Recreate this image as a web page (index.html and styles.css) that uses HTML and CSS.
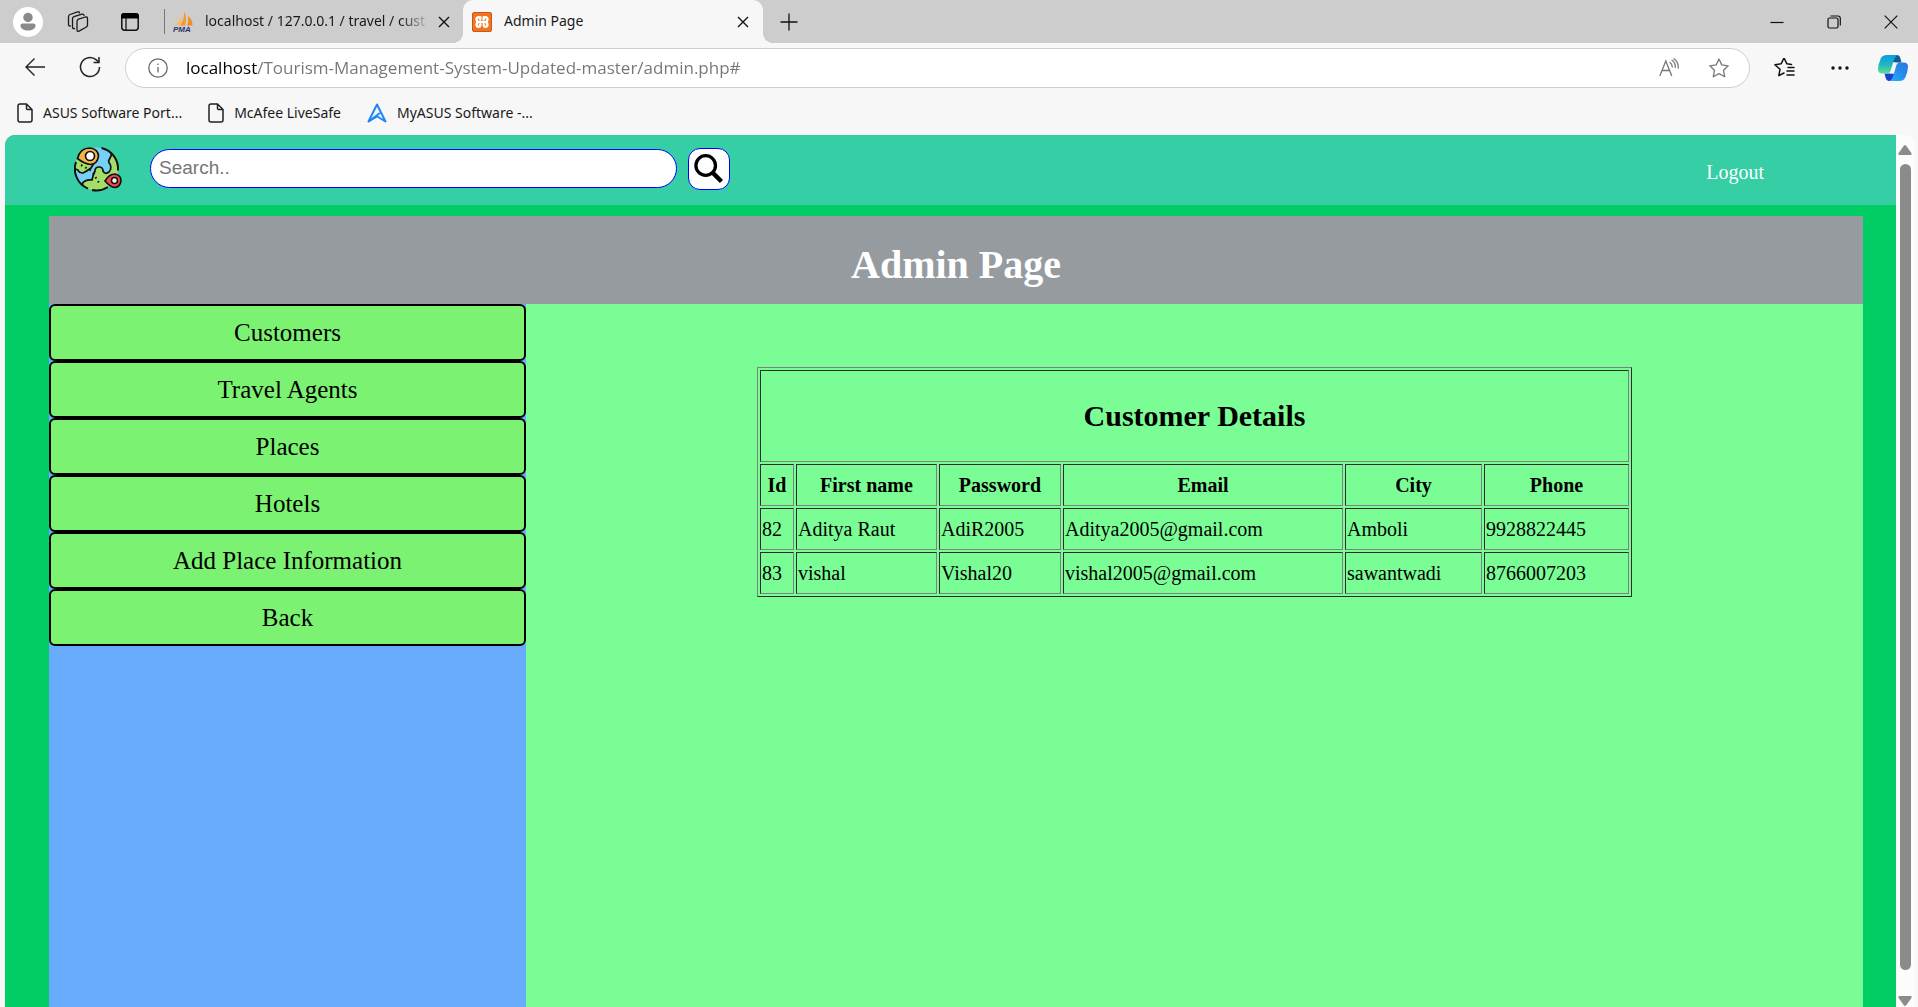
FILE: index.html
```html
<!DOCTYPE html>
<html lang="en">
<head>
<meta charset="utf-8">
<title>Admin Page</title>
<link rel="stylesheet" href="styles.css">
</head>
<body>
<header class="browser">
  <div class="tabstrip">
    <button class="icon-btn avatar-btn" aria-label="Profile"><svg width="30" height="30" viewBox="0 0 30 30"><circle cx="15" cy="15" r="15" fill="#fff"/><circle cx="15" cy="10.500" r="4.700" fill="#8a8a8a"/><path d="M9.500 16.500h11a2 2 0 0 1 2 2c0 3.200-3.400 5-7.500 5s-7.500-1.800-7.500-5a2 2 0 0 1 2-2z" fill="#8a8a8a"/></svg></button>
    <button class="icon-btn workspaces-btn" aria-label="Workspaces"><svg width="22" height="22" viewBox="0 0 22 22" fill="none" stroke="#1a1a1a" stroke-width="1.300" stroke-linejoin="round" stroke-linecap="round"><path d="M11.500 8.200L18.500 6q2-.5 2 1.500v6.500q0 1.500-1.500 2.300l-7 3.800q-2 .8-2-1.300v-8q0-2 1.500-2.600z"/><path d="M7.500 17.500q-2 .5-2-1.500V8q0-1.800 1.500-2.300L15 3.200q1.800-.4 2 1.300"/><path d="M3.300 15Q1.500 15.200 1.500 13.500V5.800q0-1.800 1.500-2.300L10.500.9q1.800-.4 2 1"/></svg></button>
    <button class="icon-btn tabmenu-btn" aria-label="Tab actions menu"><svg width="18" height="18" viewBox="0 0 18 18"><rect x=".8" y=".8" width="16.400" height="16.400" rx="3" fill="none" stroke="#111" stroke-width="1.500"/><path d="M0 5.500V3a3 3 0 0 1 3-3h12a3 3 0 0 1 3 3v2.500z" fill="#000"/><path d="M5 5v12" stroke="#111" stroke-width="1.300"/></svg></button>
    <span class="divider"></span>
    <div class="tab">
      <svg class="favicon" width="20" height="20" viewBox="0 0 20 20"><path d="M11 0c2.500 3 2.500 9 1 13.500H7C10 10 11.500 5 11 0z" fill="#f7962a"/><path d="M9 4c.5 3 0 7-2 9.500H1c3-2 6-5 8-9.500z" fill="#f9bb70"/><path d="M15 4c3 2 4.500 5.500 4.500 9.500H14c1.500-3 1.500-6 1-9.500z" fill="#ef8d1f"/><text x="0" y="19.500" font-family="Liberation Sans" font-size="8" font-weight="bold" font-style="italic" fill="#34346e">PMA</text></svg>
      <a class="tab-title fade" href="#">localhost / 127.0.0.1 / travel / cust</a>
      <button class="icon-btn tab-close" aria-label="Close tab"><svg width="12" height="12" viewBox="0 0 12 12" stroke="#111" stroke-width="1.400"><path d="M1 1l10 10M11 1L1 11"/></svg></button>
    </div>
    <div class="tab tab-active">
      <svg class="favicon" width="20" height="20" viewBox="0 0 20 20"><rect x=".5" y=".5" width="19" height="19" rx="1.500" fill="#f27321" stroke="#c75a12"/><path d="M7 10h6M8.300 5.200H6.500a1.900 1.900 0 0 0-1.900 2.200c.1 1.300.8 1.800.8 2.600s-.7 1.300-.8 2.600a1.900 1.900 0 0 0 1.900 2.200c1.300 0 1.800-.8 1.800-2.300M11.700 5.200h1.800a1.900 1.900 0 0 1 1.900 2.200c-.1 1.300-.8 1.800-.8 2.600s.7 1.300.8 2.600a1.900 1.900 0 0 1-1.900 2.200c-1.300 0-1.800-.8-1.800-2.300M8.300 5.200v2M11.700 5.200v2" fill="none" stroke="#fff" stroke-width="2.500" stroke-linecap="round" stroke-linejoin="round"/></svg>
      <a class="tab-title" href="#">Admin Page</a>
      <button class="icon-btn tab-close" aria-label="Close tab"><svg width="12" height="12" viewBox="0 0 12 12" stroke="#111" stroke-width="1.400"><path d="M1 1l10 10M11 1L1 11"/></svg></button>
    </div>
    <button class="icon-btn new-tab" aria-label="New tab"><svg width="18" height="18" viewBox="0 0 18 18" stroke="#111" stroke-width="1.300"><path d="M9 0.500v17M.5 9h17"/></svg></button>
    <div class="window-controls">
      <button class="icon-btn win-btn" aria-label="Minimize"><svg width="14" height="14" viewBox="0 0 14 14" stroke="#111" stroke-width="1.200"><path d="M.5 7.500h13"/></svg></button>
      <button class="icon-btn win-btn" aria-label="Restore"><svg width="14" height="14" viewBox="0 0 14 14" fill="none" stroke="#111" stroke-width="1.200"><rect x="1" y="3" width="10" height="10" rx="1.500"/><path d="M3.500 1H11q2.300 0 2.300 2.300V10.500"/></svg></button>
      <button class="icon-btn win-btn" aria-label="Close"><svg width="14" height="14" viewBox="0 0 14 14" stroke="#111" stroke-width="1.200"><path d="M.7.7l12.600 12.600M13.300.7L.7 13.300"/></svg></button>
    </div>
  </div>
  <div class="toolbar">
    <button class="icon-btn nav-btn" aria-label="Back"><svg width="20" height="20" viewBox="0 0 20 20" fill="none" stroke="#222" stroke-width="1.400"><path d="M20 10H1M9.500 1.500L1 10l8.500 8.500"/></svg></button>
    <button class="icon-btn nav-btn" aria-label="Refresh"><svg width="22" height="22" viewBox="0 0 22 22" fill="none" stroke="#222" stroke-width="1.500"><path d="M20.500 11a9.500 9.500 0 1 1-3.200-7.100L20 6.300"/><path d="M20 1v5.500h-5.500"/></svg></button>
    <form class="address" action="#">
      <svg width="20" height="20" viewBox="0 0 20 20" fill="none" stroke="#6a6a6a" stroke-width="1.300"><circle cx="10" cy="10" r="9.200"/><path d="M10 9v5.500M10 5.500v1.500"/></svg>
      <input class="address-input" type="text" aria-label="Address" value="localhost/Tourism-Management-System-Updated-master/admin.php#">
      <button class="icon-btn" type="button" aria-label="Read aloud"><svg width="20" height="20" viewBox="0 0 20 20" fill="none" stroke="#777" stroke-width="1.300" stroke-linecap="round"><path d="M1 17.500L6.800 3l5.800 14.500M3 12.500h7.600M11 4.500q2.300 1.500 2.300 4.500M13 2.300q3.500 2.200 3.300 7.200M15 .7q4.500 3 4.300 9.300"/></svg></button>
      <button class="icon-btn" type="button" aria-label="Add to favorites"><svg width="20" height="20" viewBox="0 0 20 20" fill="none" stroke="#777" stroke-width="1.300" stroke-linejoin="round"><path d="M10 1l2.800 5.900 6.400.9-4.700 4.400 1.200 6.500-5.700-3.100-5.700 3.100 1.200-6.500L.8 7.800l6.400-.9z"/></svg></button>
    </form>
    <button class="icon-btn side-btn" aria-label="Favorites"><svg width="21" height="20" viewBox="0 0 21 20" fill="none" stroke="#111" stroke-width="1.500" stroke-linejoin="round" stroke-linecap="round"><path d="M10 16l-5.200 2.700L6 12.300.9 7.700l6.300-1L10 1l2.800 5.700 4.700.8M14 10.500h6M13 14h7M13 18h7" transform="translate(0 -1)"/></svg></button>
    <button class="icon-btn side-btn" aria-label="Settings and more"><svg width="18" height="4" viewBox="0 0 18 4" fill="#111"><circle cx="2" cy="2" r="1.700"/><circle cx="9" cy="2" r="1.700"/><circle cx="16" cy="2" r="1.700"/></svg></button>
    <button class="icon-btn copilot-btn" aria-label="Copilot"><svg width="30" height="28" viewBox="0 0 30 28"><defs><linearGradient id="cpa" x1="0" y1="0" x2="0" y2="1"><stop offset="0" stop-color="#0f9be0"/><stop offset=".5" stop-color="#1db5c4"/><stop offset="1" stop-color="#5fe08c"/></linearGradient><linearGradient id="cpb" x1="0" y1="1" x2="1" y2="0"><stop offset="0" stop-color="#1fb0fb"/><stop offset="1" stop-color="#2b6fe0"/></linearGradient></defs><path d="M14 1h5q2.500 0 3.300 3L23.500 8.500h-5L14 8z" fill="#0b5f96"/><path d="M16 27h-5.500q-2 0-2.800-3L6.500 19.500h5L17 20z" fill="#1b3fd0"/><path d="M9 1h11q-3 1-4 4.500l-3.300 11q-.9 3-3.700 3H4.500Q0 19.500 0 15.500 0 11 2.700 4.500 4.200 1 9 1z" fill="url(#cpa)"/><path d="M21 27H11.500q2.500-1 3.500-4.500l3.300-11q.9-3 3.700-3h3.500q4.500 0 4.500 4 0 4.500-2.700 11Q25.800 27 21 27z" fill="url(#cpb)"/></svg></button>
  </div>
  <nav class="bookmarks">
    <a class="bookmark" href="#"><svg width="16" height="20" viewBox="0 0 16 20" fill="none" stroke="#222" stroke-width="1.500" stroke-linejoin="round"><path d="M3 1h6.500L15 6.500V17a2 2 0 0 1-2 2H3a2 2 0 0 1-2-2V3a2 2 0 0 1 2-2zM9.500 1v4.500a1 1 0 0 0 1 1H15"/></svg>ASUS Software Port...</a>
    <a class="bookmark" href="#"><svg width="16" height="20" viewBox="0 0 16 20" fill="none" stroke="#222" stroke-width="1.500" stroke-linejoin="round"><path d="M3 1h6.500L15 6.500V17a2 2 0 0 1-2 2H3a2 2 0 0 1-2-2V3a2 2 0 0 1 2-2zM9.500 1v4.500a1 1 0 0 0 1 1H15"/></svg>McAfee LiveSafe</a>
    <a class="bookmark" href="#"><svg width="20" height="20" viewBox="0 0 20 20" fill="none" stroke="#1f86f8" stroke-width="2" stroke-linejoin="round"><path d="M10 13.500L1.500 18.500 10 1.500l8.500 17-9-5.500"/><path d="M1.500 18.500L13 10"/></svg>MyASUS Software -...</a>
  </nav>
</header>
<div class="viewport">
  <div class="site">
    <nav class="navbar">
      <a class="logo" href="#" aria-label="Home"><svg width="48" height="46" viewBox="0 0 48 46"><defs><clipPath id="globe"><circle cx="22.500" cy="23" r="21.500"/></clipPath></defs><circle cx="22.500" cy="23" r="21.500" fill="#77d0f8"/><g clip-path="url(#globe)" stroke="#111" stroke-width="1.700" stroke-linejoin="round"><path d="M38 2l-1 8-2 4q-1 2 1 4 2 5-1 8-4 3-6-1 0-4-4-4-4 0-4 4-2 4-3 9-7-1-10 4l9 11h31V2z" fill="#a5dd6b"/><path d="M-1 22l5 2q1 3 5 3 4-2 8-5l3-5-8-2-8-3-5 1z" fill="#a5dd6b"/></g><g fill="none" stroke="#111" stroke-width="2"><path d="M27.500 2A21.500 21.500 0 0 1 44 24.500"/><path d="M2 16A21.500 21.500 0 0 0 14 42.700"/><path d="M18 44a21.500 21.500 0 0 0 16-3"/><path d="M7 19l13 7M19 27l6 10" stroke-dasharray="1.600 3.200"/></g><path d="M3.500 12.500Q6 2 16 2q8 1 8.500 8-1 8-8 8.500-6-.5-13-6z" fill="#f8b24b" stroke="#111" stroke-width="1.700"/><circle cx="16" cy="10" r="4.500" fill="#fff" stroke="#111" stroke-width="1.700"/><path d="M31 35q4-7 10-7 6 1 6 7-1 6-6 6.500-5-.5-10-6.500z" fill="#f5484c" stroke="#111" stroke-width="1.600"/><circle cx="40.500" cy="34.500" r="3" fill="#fff" stroke="#111" stroke-width="1.600"/></svg></a>
      <form class="search" action="#">
        <input class="search-input" type="text" placeholder="Search.." aria-label="Search">
        <button class="search-btn" type="button" aria-label="Search"><svg width="30" height="30" viewBox="0 0 30 30" fill="none" stroke="#000"><circle cx="11.700" cy="11.500" r="9.800" stroke-width="3.300"/><path d="M18.500 18.500l9 9" stroke-width="4.500"/></svg></button>
      </form>
      <a class="logout" href="#">Logout</a>
    </nav>
    <main class="admin">
      <h1 class="admin-title">Admin Page</h1>
      <div class="columns">
        <aside class="menu">
          <button class="menu-btn">Customers</button>
          <button class="menu-btn">Travel Agents</button>
          <button class="menu-btn">Places</button>
          <button class="menu-btn">Hotels</button>
          <button class="menu-btn">Add Place Information</button>
          <button class="menu-btn">Back</button>
        </aside>
        <section class="content">
          <table class="customers">
            <colgroup><col class="c-id"><col class="c-name"><col class="c-pass"><col class="c-email"><col class="c-city"><col class="c-phone"></colgroup>
            <thead>
              <tr class="caption-row"><th colspan="6"><h2 class="table-title">Customer Details</h2></th></tr>
              <tr><th>Id</th><th>First name</th><th>Password</th><th>Email</th><th>City</th><th>Phone</th></tr>
            </thead>
            <tbody>
              <tr><td>82</td><td>Aditya Raut</td><td>AdiR2005</td><td>Aditya2005@gmail.com</td><td>Amboli</td><td>9928822445</td></tr>
              <tr><td>83</td><td>vishal</td><td>Vishal20</td><td>vishal2005@gmail.com</td><td>sawantwadi</td><td>8766007203</td></tr>
            </tbody>
          </table>
        </section>
      </div>
    </main>
  </div>
  <div class="scrollbar" aria-hidden="true">
    <svg width="14" height="10" viewBox="0 0 14 10"><path d="M5.800.8q1.200-1.400 2.400 0l5.300 7.400q.5 1.600-1 1.800h-11q-1.500-.2-1-1.800z" fill="#8b8b8b"/></svg>
    <span class="thumb"></span>
    <svg width="14" height="10" viewBox="0 0 14 10"><path d="M5.800 9.200q1.200 1.400 2.400 0l5.300-7.400q.5-1.600-1-1.800h-11q-1.500.2-1 1.800z" fill="#8b8b8b"/></svg>
  </div>
</div>
</body>
</html>
```
FILE: styles.css
```css
* { box-sizing: border-box; }

body {
  margin: 0;
  height: 100vh;
  display: flex;
  flex-direction: column;
  overflow: hidden;
  background: #f7f7f7;
  font-family: "Liberation Serif", "Times New Roman", serif;
}

svg { display: block; flex: none; }
a { color: inherit; text-decoration: none; }

.icon-btn {
  flex: none;
  display: flex;
  align-items: center;
  justify-content: center;
  padding: 0;
  border: 0;
  background: none;
}

/* Browser frame */
.browser {
  flex: none;
  font-family: "Noto Sans", "Open Sans", sans-serif;
  color: #1a1a1a;
}

.tabstrip {
  display: flex;
  align-items: center;
  height: 43px;
  padding-left: 13px;
  background: #cdcdcd;
}

.workspaces-btn { margin-left: 24px; }
.tabmenu-btn { margin-left: 32px; }

.divider {
  flex: none;
  width: 1px;
  height: 25px;
  margin-left: 25px;
  background: #777;
}

.tab {
  flex: none;
  display: flex;
  align-items: center;
  width: 298px;
  height: 43px;
  padding: 0 13px 0 8px;
  font-size: 14px;
}

.tab-title {
  flex: 1;
  margin-left: 12px;
  padding-bottom: 2px;
  white-space: nowrap;
}

.fade { mask-image: linear-gradient(to right, #000 195px, transparent 226px); }
.tab-close { margin-left: 8px; }

.tab-active {
  position: relative;
  width: 300px;
  padding: 0 14px 0 9px;
  border-radius: 10px 10px 0 0;
  background: #f7f7f7;
}

/* Flared feet of the selected tab */
.tab-active::before,
.tab-active::after {
  content: "";
  position: absolute;
  bottom: 0;
  width: 10px;
  height: 10px;
}
.tab-active::before {
  right: 100%;
  background: radial-gradient(circle at 0 0, transparent 10px, #f7f7f7 10px);
}
.tab-active::after {
  left: 100%;
  background: radial-gradient(circle at 100% 0, transparent 10px, #f7f7f7 10px);
}

.new-tab { margin-left: 17px; }

.window-controls { display: flex; margin-left: auto; }
.win-btn { width: 57px; height: 43px; padding-left: 2px; }

.toolbar {
  display: flex;
  align-items: center;
  height: 50px;
  padding: 0 10px 0 7px;
}

.nav-btn {
  width: 55px;
  height: 40px;
  padding-bottom: 2px;
}

.address {
  flex: 1;
  display: flex;
  align-items: center;
  height: 40px;
  margin-left: 8px;
  margin-right: 7px;
  padding: 0 20px 0 22px;
  gap: 30px;
  border: 1px solid #cecece;
  border-radius: 20px;
  background: #fff;
}

.address-input {
  flex: 1;
  min-width: 0;
  margin-left: -12px;
  padding: 0 0 2px;
  border: 0;
  outline: 0;
  font: 17px "Open Sans", "Noto Sans", sans-serif;
  color: transparent;
  background: linear-gradient(to right, #000 71px, #757575 71px);
  -webkit-background-clip: text;
  background-clip: text;
}

.side-btn { width: 56px; height: 40px; padding-right: 2px; }
.copilot-btn { margin-left: 9px; }

.bookmarks {
  display: flex;
  align-items: center;
  height: 42px;
  padding: 0 17px 3px;
  gap: 26px;
}

.bookmark {
  display: flex;
  align-items: center;
  gap: 10px;
  font-size: 14px;
}

/* Page area */
.viewport {
  flex: 1;
  min-height: 0;
  display: flex;
  margin: 0 3px 0 5px;
  overflow: hidden;
  border-radius: 10px 10px 0 0;
  background: #fcfcfc;
}

.site {
  flex: 1;
  display: flex;
  flex-direction: column;
  background: #00ce64;
}

.navbar {
  flex: none;
  display: flex;
  align-items: center;
  height: 70px;
  padding: 0 132px 3px 69px;
  background: #36cea4;
}

.search {
  display: flex;
  align-items: center;
  gap: 11px;
  margin-left: 28px;
}

.search-input {
  width: 527px;
  height: 39px;
  padding: 0 8px 2px;
  border: 1px solid #0000ff;
  border-radius: 20px;
  background: #fff;
  font: 19px "Liberation Sans", Arial, sans-serif;
}

.search-btn {
  display: flex;
  padding: 5px;
  border: 1px solid #0000ff;
  border-radius: 12px;
  background: #fff;
}

.logout {
  margin-left: auto;
  padding-top: 8px;
  font-size: 20px;
  color: #fff;
}

.admin {
  flex: 1;
  min-height: 0;
  display: flex;
  flex-direction: column;
  margin: 11px 33px 0 44px;
}

.admin-title {
  margin: 0;
  padding: 26px 0 16px;
  background: #969b9f;
  font-size: 40px;
  line-height: 46px;
  text-align: center;
  color: #fff;
}

.columns {
  flex: 1;
  display: flex;
}

.menu {
  flex: none;
  display: flex;
  flex-direction: column;
  width: 477px;
  background: #68aafc;
}

.menu-btn {
  height: 57px;
  padding: 0;
  border: 2px solid #000;
  border-radius: 6px;
  background: #7bf271;
  font: 25px "Liberation Serif", "Times New Roman", serif;
  color: #000;
}

.content {
  flex: 1;
  padding-top: 63px;
  background: #7bfd96;
}

.customers {
  width: 875px;
  margin: 0 auto;
  table-layout: fixed;
  border: 1px solid;
  border-color: #808080 #2c2c2c #2c2c2c #808080;
  border-spacing: 2px;
  font-size: 20px;
  color: #000;
}

.customers th,
.customers td {
  height: 42px;
  padding: 1px;
  border: 1px solid;
  border-color: #2c2c2c #808080 #808080 #2c2c2c;
}

.customers .caption-row th { height: 92px; }

.table-title { margin: 0; font-size: 30px; }

.c-id { width: 34px; }
.c-name { width: 141px; }
.c-pass { width: 122px; }
.c-email { width: 280px; }
.c-city { width: 137px; }
.c-phone { width: 145px; }

.scrollbar {
  flex: none;
  display: flex;
  flex-direction: column;
  align-items: center;
  gap: 9px;
  width: 19px;
  padding: 10px 1px 1px 0;
}

.thumb {
  flex: 1;
  width: 11px;
  margin-bottom: 17px;
  border-radius: 6px;
  background: #8b8b8b;
}
```
